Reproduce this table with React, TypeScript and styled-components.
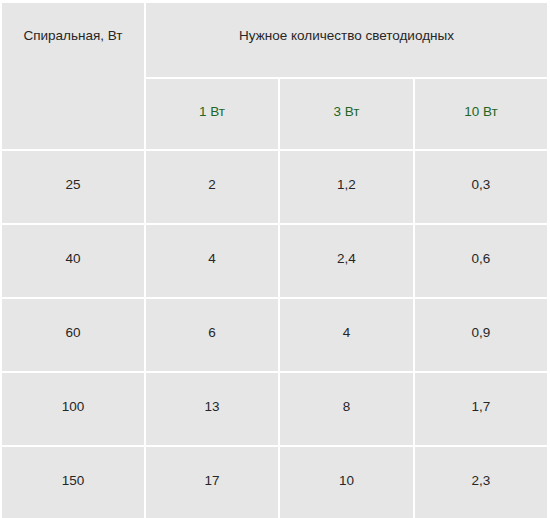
import * as React from 'react';
import styled, { createGlobalStyle } from 'styled-components';

const GlobalStyle = createGlobalStyle`
    html, body {
        margin: 0;
        padding: 0;
        background: #ffffff;
    }
`;

const Page = styled.div`
    padding-top: 1px;
    width: 550px;
`;

const Table = styled.table`
    border-collapse: separate;
    border-spacing: 2px;
    width: 549px;
    table-layout: fixed;
    font-family: Arial, "Liberation Sans", sans-serif;
    font-size: 13.5px;
    color: #262626;
`;

const HeadCell = styled.th<{ $top?: boolean; $green?: boolean; $h: number }>`
    background: #e6e6e6;
    font-weight: normal;
    text-align: center;
    vertical-align: ${(p) => (p.$top ? 'top' : 'middle')};
    padding: ${(p) => (p.$top ? '25px 0 0 0' : '0 0 6px 0')};
    height: ${(p) => p.$h}px;
    box-sizing: border-box;
    color: ${(p) => (p.$green ? '#22661f' : '#262626')};
`;

const Cell = styled.td`
    background: #e6e6e6;
    text-align: center;
    vertical-align: middle;
    height: 72px;
    padding: 0 0 6px 0;
    box-sizing: border-box;
`;

interface IRow {
    spiral: string;
    w1: string;
    w3: string;
    w10: string;
}

const rows: IRow[] = [
    { spiral: '25', w1: '2', w3: '1,2', w10: '0,3' },
    { spiral: '40', w1: '4', w3: '2,4', w10: '0,6' },
    { spiral: '60', w1: '6', w3: '4', w10: '0,9' },
    { spiral: '100', w1: '13', w3: '8', w10: '1,7' },
    { spiral: '150', w1: '17', w3: '10', w10: '2,3' },
];

export default function App() {
    return (
        <Page>
            <GlobalStyle />
            <Table>
                <colgroup>
                    <col style={{ width: 142 }} />
                    <col style={{ width: 132 }} />
                    <col style={{ width: 133 }} />
                    <col style={{ width: 132 }} />
                </colgroup>
                <thead>
                    <tr>
                        <HeadCell rowSpan={2} $top $h={144}>Спиральная, Вт</HeadCell>
                        <HeadCell colSpan={3} $top $h={74}>Нужное количество светодиодных</HeadCell>
                    </tr>
                    <tr>
                        <HeadCell $green $h={70}>1 Вт</HeadCell>
                        <HeadCell $green $h={70}>3 Вт</HeadCell>
                        <HeadCell $green $h={70}>10 Вт</HeadCell>
                    </tr>
                </thead>
                <tbody>
                    {rows.map((r) => (
                        <tr key={r.spiral}>
                            <Cell>{r.spiral}</Cell>
                            <Cell>{r.w1}</Cell>
                            <Cell>{r.w3}</Cell>
                            <Cell>{r.w10}</Cell>
                        </tr>
                    ))}
                </tbody>
            </Table>
        </Page>
    );
}
